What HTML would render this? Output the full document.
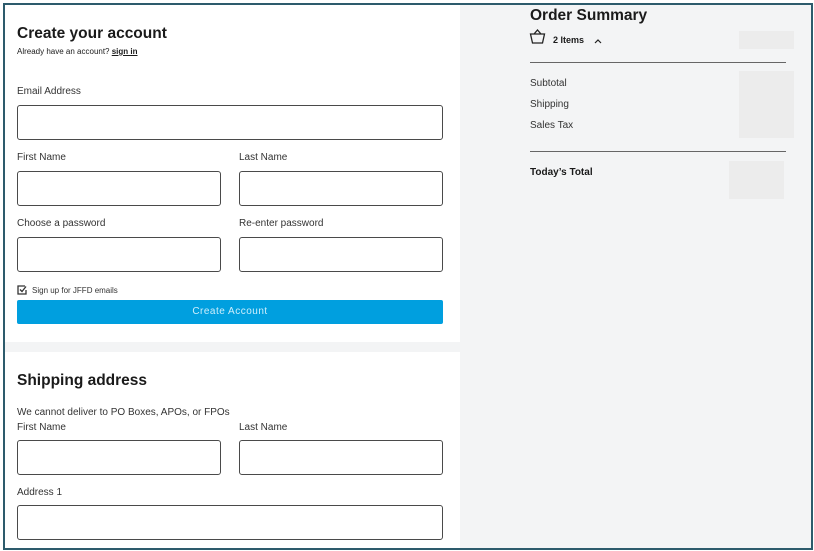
<!DOCTYPE html>
<html><head><style>
body{margin:0;width:814px;height:551px;background:#fff;font-family:"Liberation Sans",sans-serif;color:#1a1a1a;position:relative;overflow:hidden}
.frame{position:absolute;left:3px;top:3px;width:806px;height:543px;border:2px solid #2d5b6c;background:#f3f4f5;overflow:hidden}
.a{position:absolute}
.panel{position:absolute;background:#fff}
.inp{position:absolute;border:1px solid #4a4a4a;border-radius:3px;box-sizing:border-box;background:#fff}
.lbl{position:absolute;font-size:10px;color:#333}
h1{position:absolute;margin:0;font-size:15.5px;font-weight:bold}
.ph{position:absolute;background:#ececec}
.hr{position:absolute;height:1px;background:#666}
</style></head><body>
<div class="frame">
<div class="panel" style="left:0;top:0;width:455px;height:337px"></div>
<div class="panel" style="left:0;top:347px;width:455px;height:200px"></div>
<h1 style="left:12px;top:20px">Create your account</h1>
<div class="a" style="left:12px;top:42px;font-size:8px">Already have an account? <b style="text-decoration:underline">sign in</b></div>
<div class="lbl" style="left:12px;top:81px">Email Address</div>
<div class="inp" style="left:12px;top:100px;width:426px;height:35px"></div>
<div class="lbl" style="left:12px;top:147px">First Name</div>
<div class="lbl" style="left:234px;top:147px">Last Name</div>
<div class="inp" style="left:12px;top:166px;width:204px;height:35px"></div>
<div class="inp" style="left:234px;top:166px;width:204px;height:35px"></div>
<div class="lbl" style="left:12px;top:213px">Choose a password</div>
<div class="lbl" style="left:234px;top:213px">Re-enter password</div>
<div class="inp" style="left:12px;top:232px;width:204px;height:35px"></div>
<div class="inp" style="left:234px;top:232px;width:204px;height:35px"></div>
<svg class="a" style="left:12px;top:280px" width="10" height="10" viewBox="0 0 10 10"><path d="M8 1H1V9H9V5" fill="none" stroke="#333" stroke-width="1.3"/><path d="M3 4.5L5 6.5L9 1.5" fill="none" stroke="#333" stroke-width="1.3"/></svg>
<div class="a" style="left:27px;top:281px;font-size:8px;color:#333">Sign up for JFFD emails</div>
<div class="a" style="left:12px;top:295px;width:426px;height:24px;background:#009fdf;border-radius:2px;color:#cdeefc;font-size:10px;text-align:center;line-height:24px;letter-spacing:.5px">Create Account</div>
<h1 style="left:12px;top:367px">Shipping address</h1>
<div class="lbl" style="left:12px;top:402px">We cannot deliver to PO Boxes, APOs, or FPOs</div>
<div class="lbl" style="left:12px;top:417px">First Name</div>
<div class="lbl" style="left:234px;top:417px">Last Name</div>
<div class="inp" style="left:12px;top:435px;width:204px;height:35px"></div>
<div class="inp" style="left:234px;top:435px;width:204px;height:35px"></div>
<div class="lbl" style="left:12px;top:482px">Address 1</div>
<div class="inp" style="left:12px;top:500px;width:426px;height:35px"></div>

<h1 style="left:525px;top:2px">Order Summary</h1>
<svg class="a" style="left:524px;top:23px" width="17" height="17" viewBox="0 0 17 17"><path d="M5 6L8.5 2L12 6M1.5 6H15.5L13.5 15H3.5Z" fill="none" stroke="#222" stroke-width="1.3"/></svg>
<div class="a" style="left:548px;top:30px;font-size:9px;font-weight:bold">2 Items</div>
<svg class="a" style="left:589px;top:33px" width="8" height="6" viewBox="0 0 8 6"><path d="M1 5L4 2L7 5" fill="none" stroke="#222" stroke-width="1.2"/></svg>
<div class="ph" style="left:734px;top:26px;width:55px;height:18px"></div>
<div class="hr" style="left:525px;top:57px;width:256px"></div>
<div class="lbl" style="left:525px;top:73px">Subtotal</div>
<div class="lbl" style="left:525px;top:94px">Shipping</div>
<div class="lbl" style="left:525px;top:115px">Sales Tax</div>
<div class="ph" style="left:734px;top:66px;width:55px;height:67px"></div>
<div class="hr" style="left:525px;top:146px;width:256px"></div>
<div class="a" style="left:525px;top:162px;font-size:10px;font-weight:bold">Today’s Total</div>
<div class="ph" style="left:724px;top:156px;width:55px;height:38px"></div>
</div>
</body></html>
